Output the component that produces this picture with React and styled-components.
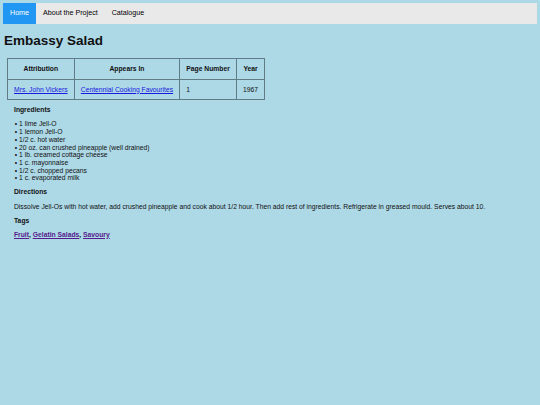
import React from "react";
import styled, { createGlobalStyle } from "styled-components";

const GlobalStyle = createGlobalStyle`
  html, body {
    background: #add8e6;
  }
  body {
    margin: 3px;
    font-family: "Liberation Sans", Arial, Helvetica, sans-serif;
    font-size: 6.75px;
    line-height: 7.7px;
    color: #111;
  }
`;

const TopNav = styled.nav`
  display: flex;
  background: #e9e9e9;
`;

const NavLink = styled.a`
  display: block;
  padding: 6px 7px;
  font-size: 7.14px;
  line-height: 9px;
  text-decoration: none;
  color: ${(p) => (p.$active ? "#fff" : "#000")};
  background: ${(p) => (p.$active ? "#2196f3" : "transparent")};
`;

const Title = styled.h1`
  font-size: 13.5px;
  line-height: 15.5px;
  margin: 9px 0 9px 1px;
`;

const InfoTable = styled.table`
  margin-left: 4px;
  border-collapse: collapse;
  border: 1px solid #5f7c87;
`;

const HeadCell = styled.th`
  border: 1px solid #5f7c87;
  padding: 6.5px 6.1px;
  font-weight: bold;
  text-align: center;
`;

const Cell = styled.td`
  border: 1px solid #5f7c87;
  padding: 5.5px 6.1px;
  text-align: left;
`;

const TableLink = styled.a`
  color: #1a1ae0;
`;

const Content = styled.section`
  padding-left: 11px;
`;

const Heading = styled.h4`
  font-size: 6.75px;
  font-weight: bold;
  margin: 6.4px 0;
`;

const List = styled.ul`
  margin: 6.4px 0;
  padding-left: 5px;

  li::marker {
    content: "• ";
  }
`;

const Para = styled.p`
  margin: 6.4px 0;
`;

const TagLink = styled.a`
  color: #551a8b;
  font-weight: bold;
`;

const TagSep = styled.span`
  font-weight: bold;
`;

const ingredients = [
  "1 lime Jell-O",
  "1 lemon Jell-O",
  "1/2 c. hot water",
  "20 oz. can crushed pineapple (well drained)",
  "1 lb. creamed cottage cheese",
  "1 c. mayonnaise",
  "1/2 c. chopped pecans",
  "1 c. evaporated milk",
];

const tags = ["Fruit", "Gelatin Salads", "Savoury"];

export default function App() {
  return (
    <>
      <GlobalStyle />
      <TopNav>
        <NavLink $active href="#">Home</NavLink>
        <NavLink href="#">About the Project</NavLink>
        <NavLink href="#">Catalogue</NavLink>
      </TopNav>
      <Title>Embassy Salad</Title>
      <InfoTable>
        <thead>
          <tr>
            <HeadCell>Attribution</HeadCell>
            <HeadCell>Appears In</HeadCell>
            <HeadCell>Page Number</HeadCell>
            <HeadCell>Year</HeadCell>
          </tr>
        </thead>
        <tbody>
          <tr>
            <Cell><TableLink href="#">Mrs. John Vickers</TableLink></Cell>
            <Cell><TableLink href="#">Centennial Cooking Favourites</TableLink></Cell>
            <Cell>1</Cell>
            <Cell>1967</Cell>
          </tr>
        </tbody>
      </InfoTable>
      <Content>
        <Heading>Ingredients</Heading>
        <List>
          {ingredients.map((item) => (
            <li key={item}>{item}</li>
          ))}
        </List>
        <Heading>Directions</Heading>
        <Para>
          Dissolve Jell-Os with hot water, add crushed pineapple and cook about 1/2 hour. Then add rest of ingredients. Refrigerate in greased mould. Serves about 10.
        </Para>
        <Heading>Tags</Heading>
        <Para>
          {tags.map((t, i) => (
            <React.Fragment key={t}>
              <TagLink href="#">{t}</TagLink>
              {i < tags.length - 1 && <TagSep>, </TagSep>}
            </React.Fragment>
          ))}
        </Para>
      </Content>
    </>
  );
}
